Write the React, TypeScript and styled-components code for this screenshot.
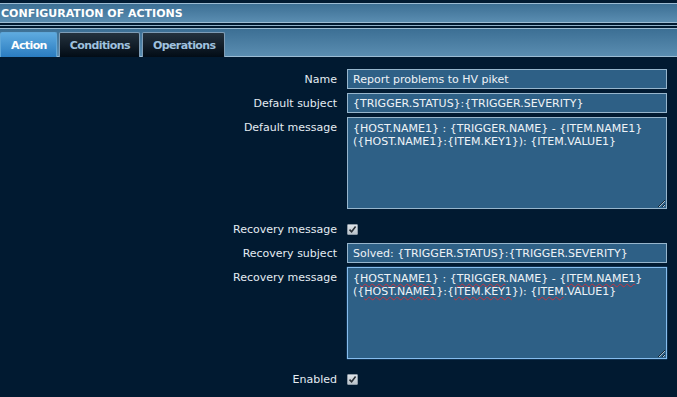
import React from "react";
import styled, { createGlobalStyle } from "styled-components";

const Global = createGlobalStyle`
  html, body { margin: 0; padding: 0; background: #011a31; }
  body { font-family: "DejaVu Sans", Verdana, sans-serif; font-size: 11px; color: #e4ecf3; }
  #root { width: 677px; height: 397px; overflow: hidden; }
`;

const Page = styled.div`
  width: 677px;
  height: 397px;
  background: #011a31;
  padding-top: 3px;
  box-sizing: border-box;
  overflow: hidden;
`;

const TitleBar = styled.div`
  height: 18px;
  border-top: 1px solid #9cbcd4;
  border-bottom: 1px solid #9cbcd4;
  background: linear-gradient(#3c6f94, #5a8db1);
  display: flex;
  align-items: center;
  padding-left: 1px;
  font-weight: bold;
  font-size: 11px;
  color: #ffffff;
`;

const Rule = styled.div`
  height: 1px;
  margin-top: 2px;
  background: #8fb0c8;
`;

const TabBand = styled.div`
  margin-top: 2px;
  height: 27px;
  border-top: 1px solid #9cbcd4;
  border-bottom: 1px solid #9cbcd4;
  background: linear-gradient(#3c6f94, #5a8db1);
  display: flex;
  align-items: flex-end;
  gap: 2px;
`;

const Tab = styled.div<{ $active?: boolean }>`
  height: 25px;
  box-sizing: border-box;
  padding: 0 9px 0 10px;
  display: flex;
  align-items: center;
  font-weight: bold;
  font-size: 11px;
  letter-spacing: -0.6px;
  border-radius: 2px 2px 0 0;
  color: ${(p) => (p.$active ? "#ffffff" : "#9fc1de")};
  background: ${(p) =>
    p.$active
      ? "linear-gradient(#5eaadf, #2a7cc0)"
      : "linear-gradient(#24323e, #020c16)"};
  border: 1px solid ${(p) => (p.$active ? "#5ea6d8" : "#7f9db6")};
  border-bottom: none;
  margin-bottom: -1px;
`;

const Form = styled.div`
  padding-top: 12px;
  display: flex;
  flex-direction: column;
`;

const Row = styled.div<{ $mt?: number; $top?: boolean }>`
  display: grid;
  grid-template-columns: 337px 320px;
  column-gap: 10px;
  align-items: ${(p) => (p.$top ? "start" : "center")};
  margin-top: ${(p) => p.$mt ?? 0}px;
`;

const Label = styled.div<{ $top?: boolean }>`
  text-align: right;
  color: #e4ecf3;
  padding-top: ${(p) => (p.$top ? "4px" : "0")};
  line-height: 13px;
`;

const Input = styled.input`
  width: 320px;
  height: 20px;
  box-sizing: border-box;
  border: 1px solid #97b6cd;
  background: #2e6086;
  color: #eef3f7;
  font-family: "DejaVu Sans", Verdana, sans-serif;
  font-size: 11px;
  padding: 0 5px;
  outline: none;
`;

const TextArea = styled.textarea`
  width: 320px;
  height: 92px;
  box-sizing: border-box;
  border: 1px solid #97b6cd;
  background: #2e6086;
  color: #eef3f7;
  font-family: "DejaVu Sans", Verdana, sans-serif;
  font-size: 11px;
  line-height: 13px;
  padding: 4px 5px;
  outline: none;
  resize: both;
  margin: 0;
  display: block;
`;

const TextBox = styled.div`
  width: 320px;
  height: 92px;
  box-sizing: border-box;
  border: 1px solid #86bdee;
  box-shadow: 0 0 1px #5c9fe0;
  background: #2e6086;
  color: #eef3f7;
  font-size: 11px;
  line-height: 13px;
  padding: 4px 5px;
  resize: both;
  overflow: hidden;
`;

const Line = styled.div`
  white-space: nowrap;
  height: 13px;
`;

const Misspelt = styled.span`
  text-decoration: underline wavy #c8323c;
  text-decoration-thickness: 1px;
  text-underline-offset: 1px;
`;

const Check = styled.span`
  display: inline-flex;
  align-items: center;
  justify-content: center;
  width: 11px;
  height: 11px;
  box-sizing: border-box;
  border: 1px solid #8d9aa6;
  background: linear-gradient(#dfe4e9, #b9c2ca);
  border-radius: 1px;
`;

const CheckCell = styled.div`
  display: flex;
  height: 11px;
`;

const CheckBox = () => (
  <Check>
    <svg width="9" height="9" viewBox="0 0 9 9">
      <path d="M1.5 4.6 L3.6 6.8 L7.6 1.6" fill="none" stroke="#2a3036" strokeWidth="1.6" />
    </svg>
  </Check>
);

const msg = "{HOST.NAME1} : {TRIGGER.NAME} - {ITEM.NAME1}\n({HOST.NAME1}:{ITEM.KEY1}): {ITEM.VALUE1}";

export default function App() {
  return (
    <Page>
      <Global />
      <TitleBar>CONFIGURATION OF ACTIONS</TitleBar>
      <Rule />
      <TabBand>
        <Tab $active>Action</Tab>
        <Tab>Conditions</Tab>
        <Tab>Operations</Tab>
      </TabBand>
      <Form>
        <Row>
          <Label>Name</Label>
          <Input defaultValue="Report problems to HV piket" />
        </Row>
        <Row $mt={4}>
          <Label>Default subject</Label>
          <Input defaultValue="{TRIGGER.STATUS}:{TRIGGER.SEVERITY}" />
        </Row>
        <Row $mt={4} $top>
          <Label $top>Default message</Label>
          <TextArea defaultValue={msg} spellCheck={false} />
        </Row>
        <Row $mt={14}>
          <Label>Recovery message</Label>
          <CheckCell>
            <CheckBox />
          </CheckCell>
        </Row>
        <Row $mt={7}>
          <Label>Recovery subject</Label>
          <Input defaultValue="Solved: {TRIGGER.STATUS}:{TRIGGER.SEVERITY}" />
        </Row>
        <Row $mt={4} $top>
          <Label $top>Recovery message</Label>
          <TextBox>
            <Line>
              {"{"}<Misspelt>HOST.NAME1</Misspelt>{"} : {"}<Misspelt>TRIGGER</Misspelt>
              {".NAME} - {"}<Misspelt>ITEM.NAME1</Misspelt>{"}"}
            </Line>
            <Line>
              {"({"}<Misspelt>HOST.NAME1</Misspelt>{"}:{"}<Misspelt>ITEM.KEY1</Misspelt>
              {"}): {"}<Misspelt>ITEM</Misspelt>{".VALUE1}"}
            </Line>
          </TextBox>
        </Row>
        <Row $mt={14}>
          <Label>Enabled</Label>
          <CheckCell>
            <CheckBox />
          </CheckCell>
        </Row>
      </Form>
    </Page>
  );
}
